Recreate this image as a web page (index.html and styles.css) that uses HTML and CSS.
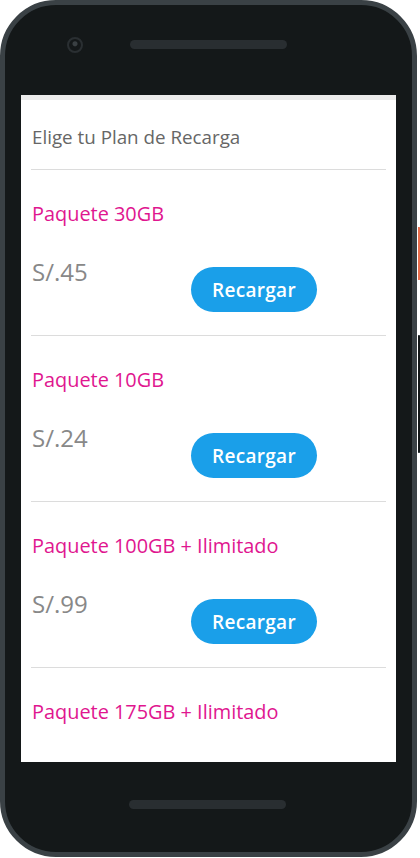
FILE: index.html
```html
<!DOCTYPE html>
<html lang="es">
<head>
    <meta charset="UTF-8">
    <meta name="viewport" content="width=device-width, initial-scale=1.0">
    <title>Recargas</title>
    <link rel="stylesheet" href="styles.css">
</head>
<body>
    <div class="phone">
        <span class="side-key power"></span>
        <span class="side-key volume"></span>

        <!-- Top bezel -->
        <div class="bezel top">
            <span class="camera"></span>
            <span class="speaker"></span>
        </div>

        <!-- Screen -->
        <div class="screen">
            <div class="status-strip"></div>
            <h2 class="screen-title">Elige tu Plan de Recarga</h2>
            <div id="plans" class="plans"></div>
        </div>

        <!-- Bottom bezel -->
        <div class="bezel bottom">
            <span class="speaker"></span>
        </div>
    </div>

    <script>
        // Recharge plans
        const plans = [
            { name: "Paquete 30GB", price: "S/.45" },
            { name: "Paquete 10GB", price: "S/.24" },
            { name: "Paquete 100GB + Ilimitado", price: "S/.99" },
            { name: "Paquete 175GB + Ilimitado", price: "S/.149" }
        ];

        function renderPlans() {
            const list = document.getElementById('plans');
            list.innerHTML = '';
            plans.forEach(plan => {
                const item = document.createElement('div');
                item.classList.add('plan');
                item.innerHTML = `
                    <h3>${plan.name}</h3>
                    <div class="plan-row">
                        <p class="price">${plan.price}</p>
                        <button type="button">Recargar</button>
                    </div>
                `;
                list.appendChild(item);
            });
        }

        document.addEventListener('DOMContentLoaded', renderPlans);
    </script>
</body>
</html>
```

FILE: styles.css
```css
/* Global styles */
body {
    font-family: 'Open Sans', 'Noto Sans', sans-serif;
    margin: 0;
    padding: 0;
    background: #fff;
}

/* Phone frame */
.phone {
    position: relative;
    width: 407px;
    height: 847px;
    border: 5px solid #3a4145;
    border-radius: 56px;
    background-color: #141819;
    display: flex;
    flex-direction: column;
}

.bezel {
    height: 90px;
    display: flex;
    align-items: center;
}

.bezel.top {
    align-items: flex-start;
    padding-top: 32px;
    box-sizing: border-box;
}

.bezel.bottom {
    justify-content: center;
}

.camera {
    width: 12px;
    height: 12px;
    margin: 0 47px 0 62px;
    border: 2px solid #2a2f32;
    border-radius: 50%;
    background: radial-gradient(circle at 50% 40%, #3a4043 0 2px, #141819 3px);
}

.speaker {
    width: 157px;
    height: 9px;
    margin-top: 3px;
    border-radius: 5px;
    background-color: #292e31;
}

.bezel.bottom .speaker {
    margin: 0 0 6px -2px;
}

.side-key {
    position: absolute;
    right: -9px;
    width: 3px;
}

.side-key.power {
    top: 222px;
    height: 53px;
    background-color: #e96f4e;
    border-radius: 0 2px 2px 0;
}

.side-key.volume {
    top: 330px;
    height: 116px;
    width: 2px;
    background-color: #141819;
    border: 1px solid #3a4145;
    border-left: none;
    border-radius: 0 2px 2px 0;
}

/* Screen */
.screen {
    width: 375px;
    height: 667px;
    margin-left: 16px;
    background-color: #fff;
    overflow: hidden;
}

.status-strip {
    height: 5px;
    background-color: #ececec;
}

.screen-title {
    margin: 0 10px;
    padding: 23px 1px 18px;
    font-size: 18.8px;
    line-height: 28px;
    font-weight: 400;
    color: #666;
    border-bottom: 1px solid #dcdcdc;
}

.plans {
    margin: 0 10px;
}

.plan {
    padding: 30px 1px 23px;
    border-bottom: 1px solid #dcdcdc;
}

.plan h3 {
    margin: 0;
    font-size: 19.9px;
    line-height: 28px;
    font-weight: 400;
    color: #e0168f;
}

.plan-row {
    display: grid;
    grid-template-columns: 159px 126px;
    align-items: start;
    margin-top: 28px;
}

.price {
    margin: 0;
    font-size: 24px;
    line-height: 32px;
    color: #888;
}

.plan-row button {
    margin-top: 11px;
    height: 45px;
    border: none;
    border-radius: 23px;
    background-color: #1a9fe9;
    color: #fff;
    font-family: inherit;
    font-size: 19px;
    font-weight: 600;
    letter-spacing: 0.3px;
    cursor: pointer;
}
```
